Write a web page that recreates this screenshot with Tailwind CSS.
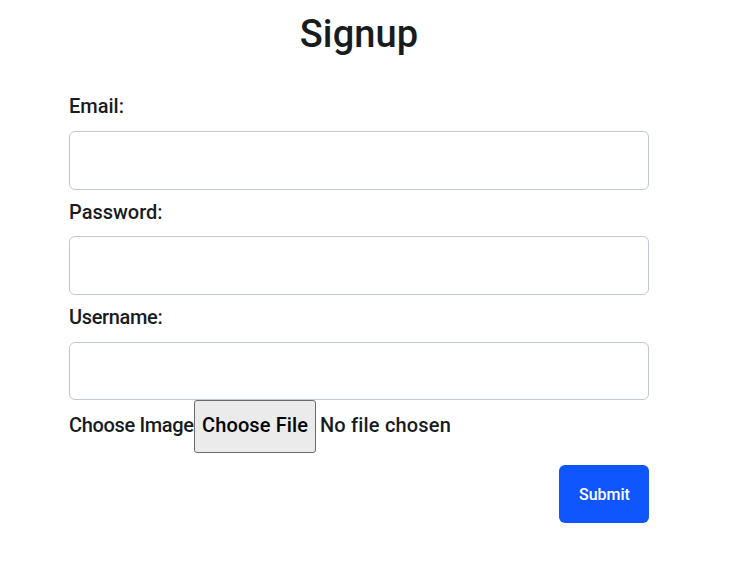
<!DOCTYPE html>
<html lang="en">
<head>
<meta charset="utf-8">
<title>Signup</title>
<script src="https://cdn.jsdelivr.net/npm/@tailwindcss/browser@4"></script>
</head>
<body class="bg-white font-['Roboto',sans-serif] font-medium text-[#171c1f]">
<form class="ml-[69px] w-[580px] text-[20px] leading-[30px] whitespace-nowrap">
  <h1 class="h-[91px] pt-[10px] text-center text-[38px] leading-[48px] tracking-[0.1px]">Signup</h1>
  <label for="email" class="block h-10">Email:</label>
  <input id="email" type="email" class="block h-[59px] w-full rounded-md border border-[#c1c7d0] bg-white px-4 outline-none">
  <label for="password" class="block h-[46px] pt-[7px]">Password:</label>
  <input id="password" type="password" class="block h-[59px] w-full rounded-md border border-[#c1c7d0] bg-white px-4 outline-none">
  <label for="username" class="block h-[47px] pt-[7px] tracking-[-0.35px]">Username:</label>
  <input id="username" type="text" class="block h-[58px] w-full rounded-md border border-[#c1c7d0] bg-white px-4 outline-none">
  <div class="flex h-[53px] items-center">
    <span class="w-[125px] pb-[3px] tracking-[-0.35px]">Choose Image</span>
    <button type="button" class="h-[53px] w-[122px] rounded-[3px] border border-[#6b6b6b] bg-[#ebebeb] pb-[3px] pl-[7px] text-left tracking-[0.12px] text-black">Choose File</button>
    <span class="ml-[4px] pb-[3px] tracking-[0.18px]">No file chosen</span>
  </div>
  <div class="flex justify-end pt-3">
    <button type="submit" class="h-[58px] w-[90px] rounded-md bg-[#0f56ff] pt-px pl-5 text-left text-[16px] text-white">Submit</button>
  </div>
</form>
</body>
</html>
